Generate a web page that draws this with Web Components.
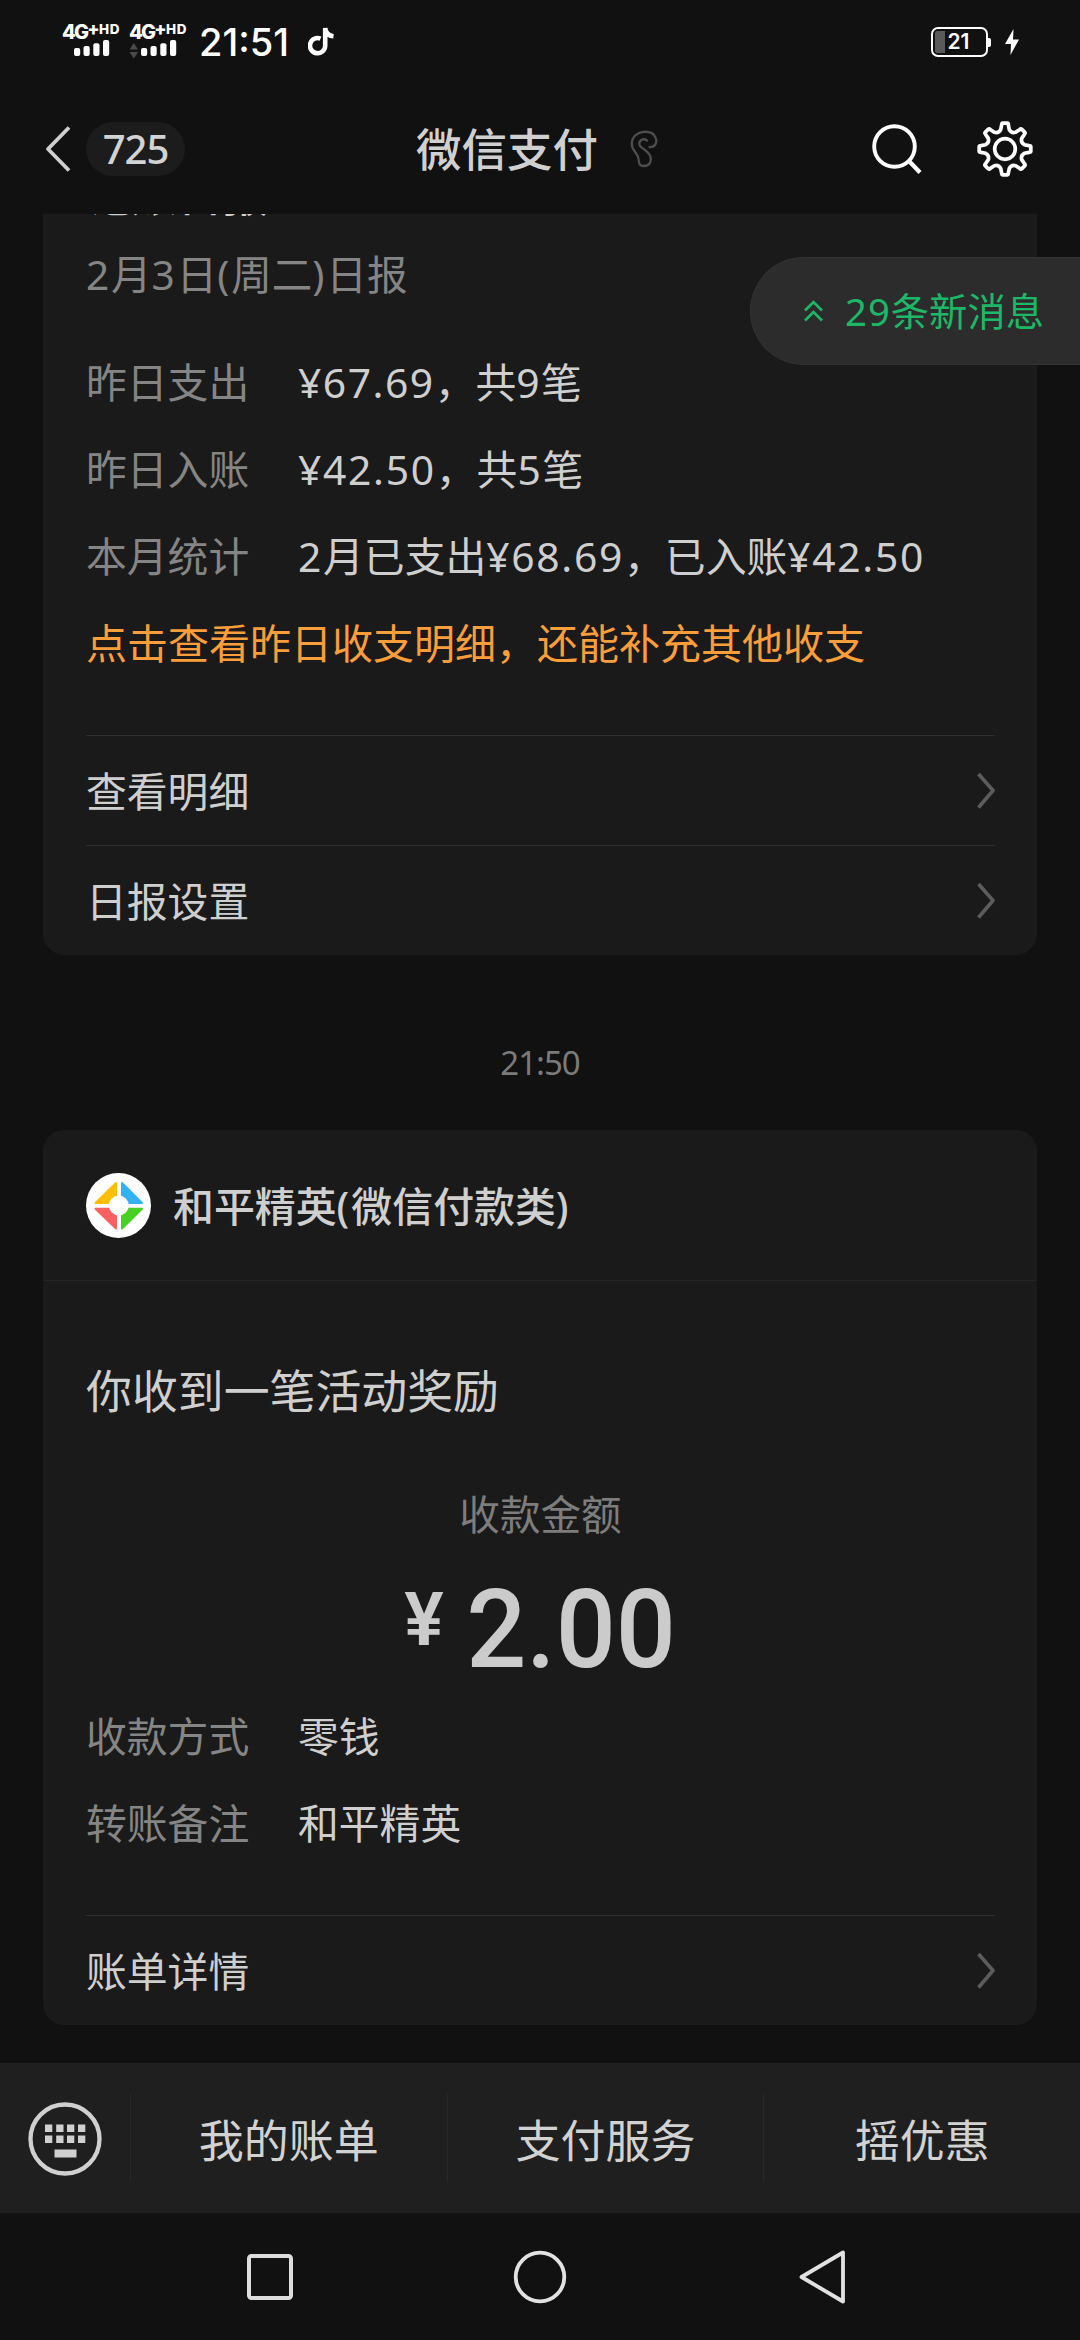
<!DOCTYPE html>
<html lang="zh-CN">
<head>
<meta charset="utf-8">
<title>微信支付</title>
<style>
html,body{margin:0;padding:0;background:#111}
body{width:1080px;height:2340px;overflow:hidden;font-family:"Noto Sans","Noto Sans CJK SC",sans-serif;color:#cfcfcf}
</style>
</head>
<body>
<pay-app></pay-app>
<script>
function define(name, html, setup){
  const t = document.createElement('template');
  t.innerHTML = html;
  customElements.define(name, class extends HTMLElement{
    connectedCallback(){
      if(this.shadowRoot) return;
      this.attachShadow({mode:'open'}).append(t.content.cloneNode(true));
      if(setup) setup.call(this, this.shadowRoot);
    }
  });
}

/* Text line; "ls" spaces the Latin runs only, so the Han glyphs keep their pitch. */
define('mixed-text', `<style>:host{display:block;white-space:pre}</style><slot></slot>`, function(){
  const ls = this.getAttribute('ls');
  if(!ls) return;
  const parts = this.textContent.split(/([\x21-\x7e¥]+)/);
  this.textContent = '';
  for(const p of parts){
    if(!p) continue;
    if(/^[\x21-\x7e¥]/.test(p)){
      const s = document.createElement('span');
      s.style.letterSpacing = ls + 'px';
      s.textContent = p;
      this.append(s);
    } else this.append(p);
  }
});

define('signal-icon', `<style>
:host{display:block;width:60px;height:36px}
.t{display:flex;align-items:flex-start;height:16px;font:800 18px/16px Inter,sans-serif;color:#fff;white-space:pre}
.g{font-size:20px;letter-spacing:-1.8px;line-height:17px}
.p{font-size:18px;line-height:10px;letter-spacing:-.5px}
.h{font-size:13.5px;line-height:11px;letter-spacing:.6px}
svg{display:block}
</style><div class="t"><span class="g">4G</span><span class="p">+</span><span class="h">HD</span></div>
<svg width="60" height="20" viewBox="0 0 60 20"><g id="a" fill="#4b4b4b" visibility="hidden"><path d="M0.5 9.5L4.8 3L9 9.5ZM0.5 12L4.8 18.5L9 12Z"/></g>
<g fill="#fff"><rect x="12" y="8" width="6.2" height="8" rx="2"/><rect x="21.5" y="6" width="6.2" height="10" rx="2"/><rect x="31.3" y="3.3" width="6.2" height="12.7" rx="2"/><rect x="41" y="0" width="6.2" height="16" rx="2"/></g></svg>`,
function(r){ if(this.hasAttribute('data-arrows')) r.getElementById('a').setAttribute('visibility','visible'); });

define('status-bar', `<style>
:host{display:flex;height:84px;align-items:center;justify-content:space-between;padding:0 60px 0 62px;box-sizing:border-box}
.l,.r{display:flex;align-items:center}
signal-icon{margin-right:7px;margin-top:0}
.c{font:500 38px/40px Inter,sans-serif;color:#fff;letter-spacing:0;width:109px;margin-left:3px}
.b{display:flex;align-items:center;justify-content:flex-start;width:57px;height:30px;box-sizing:border-box;border:2.5px solid #fff;border-radius:7px;padding:1.5px}
.f{width:10px;height:22px;background:#5a5a5a;border-radius:2px 0 0 2px}
.n{font:600 21px/22px Inter,sans-serif;color:#fff;margin-left:3px}
.k{width:3px;height:9px;background:#fff;border-radius:0 2px 2px 0;margin-right:13px}
</style>
<div class="l"><signal-icon></signal-icon><signal-icon data-arrows></signal-icon><span class="c">21:51</span>
<svg width="28" height="32" viewBox="0 0 28 32"><path d="M12.5 12.6A7.6 7.6 0 1 0 17.2 20V2C17.6 7 21 9.800 25.500 10.200" fill="none" stroke="#fff" stroke-width="4.600"/></svg></div>
<div class="r"><div class="b"><div class="f"></div><span class="n">21</span></div><div class="k"></div>
<svg width="16" height="28" viewBox="0 0 16 28"><path d="M9.500 1L1 16H7L6.500 27L15 11.500H9Z" fill="#fff"/></svg></div>`);

define('gear-icon', `<style>:host{display:block;width:60px;height:60px}svg{display:block}</style>
<svg width="60" height="60" viewBox="-30 -30 60 60" fill="none" stroke="#fff" stroke-width="3.700" stroke-linejoin="round"><path/><circle r="10.300"/></svg>`,
function(r){
  const p = (rad, a) => { a = a*Math.PI/180; return (rad*Math.sin(a)).toFixed(2)+' '+(-rad*Math.cos(a)).toFixed(2); };
  let d = '';
  for(let i=0;i<8;i++){
    const a = i*45;
    d += (i?'L':'M')+p(24.2,a-8)+'Q'+p(25.9,a-7.4)+' '+p(25.9,a-5)+'L'+p(25.9,a+5)+'Q'+p(25.9,a+7.4)+' '+p(24.2,a+8)+'L'+p(19.8,a+12.500)+'Q'+p(16.8,a+22.500)+' '+p(19.8,a+32.500);
  }
  r.querySelector('path').setAttribute('d', d+'Z');
});

define('nav-header', `<style>
:host{display:grid;grid-template-columns:416px auto 1fr;align-items:center;height:130px;box-sizing:border-box}
.l{display:flex;align-items:center;padding-left:44px;gap:15px}
.n{display:flex;align-items:center;justify-content:center;width:99px;height:54px;border-radius:27px;background:#1c1c1c;font-size:40px;font-weight:500;line-height:54px;color:#d3d3d3;letter-spacing:-1px}
.t{font-size:45.5px;font-weight:500;line-height:60px;color:#d0d0d0}
.m{display:flex;align-items:center}
.r{display:flex;align-items:center;justify-content:flex-end;padding-right:45px;gap:51px}
svg{display:block}
</style>
<div class="l"><svg width="27" height="48" viewBox="0 0 27 48"><path d="M25 2.500L4 24L25 45.500" fill="none" stroke="#d0d0d0" stroke-width="3.800" stroke-linejoin="round"/></svg><span class="n">725</span></div>
<div class="m"><span class="t">微信支付</span>
<svg style="margin-left:32px;margin-top:0" width="28" height="38" viewBox="0 0 28 38"><path d="M10 16C7.500 11 13 7.500 17 10.500M19.500 17C25.500 17.500 27.500 12 25.500 7.500C23.500 2.500 18.500 1.500 14 1.800C7 2.200 1.500 7 1.800 14.500C2 21 8 23 8.500 28.500C8.800 33 9 36 14 36C19.500 36 21.500 32 20.500 27C19.500 22 13.500 19.500 10 16" fill="none" stroke="#4e4e4e" stroke-width="2.300" stroke-linecap="round"/></svg></div>
<div class="r"><svg width="53" height="50" viewBox="0 0 53 50"><circle cx="23.500" cy="22.500" r="20.300" fill="none" stroke="#fff" stroke-width="3.900"/><path d="M37.500 36.500L49 48.500" stroke="#fff" stroke-width="4.200"/></svg><gear-icon></gear-icon></div>`);

define('info-row', `<style>
:host{display:flex;align-items:flex-start;height:87px;font-size:40.8px;line-height:84px}
.k{width:212px;color:#858585}
</style><span class="k"><slot name="k"></slot></span><slot></slot>`);

define('link-row', `<style>
:host{display:flex;align-items:center;justify-content:space-between;height:110px;box-sizing:border-box;border-top:1.500px solid #2f2f2f;font-size:40.800px;line-height:60px}
</style><span><slot></slot></span><svg width="19" height="38" viewBox="0 0 19 38"><path d="M2.500 2L17 18.500L2.500 35.500" fill="none" stroke="#5c5c5c" stroke-width="3.600" stroke-linejoin="round"/></svg>`);

define('msg-card', `<style>
:host{display:block;margin:0 43px;background:#1a1a1a;border-radius:21px}
.b{padding:0 42px 0 43px}
</style><slot name="head"></slot><div class="b"><slot></slot></div>`);

define('merchant-head', `<style>
:host{display:flex;align-items:center;height:151px;box-sizing:border-box;border-bottom:1.500px solid #252525;padding-left:43px;gap:22px;font-size:40.900px;font-weight:500;line-height:60px}
span{padding-top:1px}
</style>
<svg width="65" height="65" viewBox="-32.500 -32.500 65 65"><circle r="32.500" fill="#fff"/>
<g stroke-width="2" stroke-linejoin="round"><path d="M-2.500 -22.500V-2.500H-23Z" fill="#fdbe05" stroke="#fdbe05"/><path d="M3.500 -22.500V-2.500H23.500Z" fill="#33b1f0" stroke="#33b1f0"/><path d="M-2.500 23V3.200H-23Z" fill="#f9605f" stroke="#f9605f"/><path d="M3.500 23V3.200H23.500Z" fill="#47d125" stroke="#47d125"/></g><circle cx=".3" r="10" fill="#fff"/></svg>
<span><slot></slot></span>`);

define('money-amount', `<style>
:host{display:flex;align-items:center;justify-content:center;height:149px;padding-top:21px;box-sizing:border-box;font-family:Roboto,sans-serif;color:#cbcbcb;line-height:1}
.y{font-size:74px;font-weight:600;margin-bottom:20px;margin-right:18px}
.v{font-size:110px;font-weight:500;transform:scaleX(.962);margin-right:-3px}
</style><span class="y">¥</span><span class="v"><slot></slot></span>`);

define('new-tip', `<style>
:host{position:absolute;right:0;top:43px;width:330px;height:108px;box-sizing:border-box;border-radius:54px 0 0 54px;background:#2c2c2c;border:1px solid #333;border-right:0;display:flex;align-items:center;padding-left:53px;gap:22px;font-size:38.300px;line-height:60px;color:#1cb868}
</style><svg width="19" height="22" viewBox="0 0 19 22"><path d="M1 10.500L9.500 2L18 10.500M1 20.500L9.500 12L18 20.500" fill="none" stroke="#1cb868" stroke-width="2.600"/></svg><span><slot></slot></span>`);

define('menu-bar', `<style>
:host{display:flex;align-items:center;height:150px;background:#1f1f1f;font-size:45px;line-height:60px;color:#d2d2d2}
.k{width:130px;display:flex;justify-content:center;padding-top:2px}
.t{flex:1;height:88px;display:flex;align-items:center;justify-content:center;border-left:1.500px solid #282828}
span{padding-top:6px}
</style><div class="k"><svg width="74" height="74" viewBox="0 0 74 74"><circle cx="37" cy="37" r="34.500" fill="none" stroke="#d0d0d0" stroke-width="4.300"/><g fill="#d0d0d0"><path d="M17 22.500h7.300v7.500h-7.300zM28.200 22.500h7.300v7.500h-7.300zM39 22.500h7.300v7.500h-7.300zM50 22.500h7.300v7.500h-7.300zM17 33.500h7.300v7.500h-7.300zM28.200 33.500h7.300v7.500h-7.300zM39 33.500h7.300v7.500h-7.300zM50 33.500h7.300v7.500h-7.300zM26.500 47.500h22v8h-22z"/></g></svg></div>
<div class="t"><span>我的账单</span></div><div class="t"><span>支付服务</span></div><div class="t"><span>摇优惠</span></div>`);

define('system-nav', `<style>
:host{display:flex;height:127px;align-items:center;padding-left:243px;gap:216px;box-sizing:border-box}
svg{display:block}
.back{margin-left:15px}
</style><svg width="54" height="54" viewBox="0 0 54 54" fill="none" stroke="#ddd" stroke-width="4"><rect x="6" y="6" width="42" height="42" rx="2.500"/></svg>
<svg width="54" height="54" viewBox="0 0 54 54" fill="none" stroke="#e2e2e2" stroke-width="3.800"><circle cx="27" cy="27" r="24.300"/></svg>
<svg class="back" width="54" height="54" viewBox="0 0 54 54" fill="none" stroke="#e2e2e2" stroke-width="3.800" stroke-linejoin="round"><path d="M45 2.500V51.500L3.500 27Z"/></svg>`);

define('pay-app', `<style>
:host{display:flex;flex-direction:column;width:1080px;height:2340px;background:#111}
main{position:relative;height:1849px;overflow:hidden}
.first{margin-top:-80px}
.title{font-size:45.600px;font-weight:500;height:66px;line-height:66px;padding-top:27px;margin-bottom:2px}
.date{font-size:40.600px;height:92px;line-height:92px;color:#858585;margin-bottom:19px}
.tip{font-size:41px;height:87px;line-height:84px;color:#fa9d3b;margin-bottom:47px}
.time{height:135px;line-height:135px;margin-top:40px;text-align:center;font-size:33px;letter-spacing:-1px;color:#7b7b7b}
.got{margin-top:70px;height:80px;line-height:78px;font-size:45.900px}
.lab{margin-top:54px;height:60px;line-height:60px;font-size:40.600px;color:#7d7d7d;text-align:center}
.gap{height:47px}
</style>
<status-bar></status-bar><nav-header></nav-header>
<main>
<msg-card class="first">
<div class="title">记账日报</div>
<mixed-text class="date" ls="1.800">2月3日(周二)日报</mixed-text>
<info-row><span slot="k">昨日支出</span><mixed-text ls="1.500">¥67.69，共9笔</mixed-text></info-row>
<info-row><span slot="k">昨日入账</span><mixed-text ls="1.700">¥42.50，共5笔</mixed-text></info-row>
<info-row><span slot="k">本月统计</span><mixed-text ls="1.700">2月已支出¥68.69，已入账¥42.50</mixed-text></info-row>
<div class="tip">点击查看昨日收支明细，还能补充其他收支</div>
<link-row>查看明细</link-row><link-row>日报设置</link-row>
</msg-card>
<div class="time">21:50</div>
<msg-card>
<merchant-head slot="head"><mixed-text ls="2">和平精英(微信付款类)</mixed-text></merchant-head>
<div class="got">你收到一笔活动奖励</div>
<div class="lab">收款金额</div>
<money-amount>2.00</money-amount>
<info-row><span slot="k">收款方式</span>零钱</info-row>
<info-row><span slot="k">转账备注</span>和平精英</info-row>
<div class="gap"></div>
<link-row>账单详情</link-row>
</msg-card>
<new-tip><mixed-text ls="1">29条新消息</mixed-text></new-tip>
</main>
<menu-bar></menu-bar><system-nav></system-nav>`);
</script>
</body>
</html>
